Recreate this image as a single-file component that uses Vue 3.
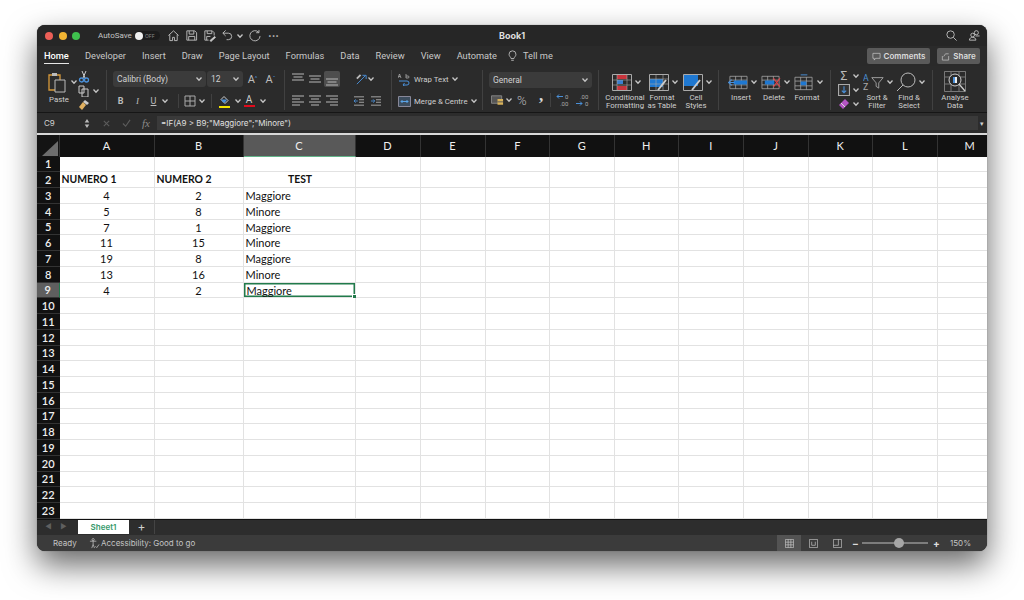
<template>
  <div class="page">
    <div class="window">
      <svg class="defs" width="0" height="0">
        <symbol id="chev" viewBox="0 0 8 8">
          <path d="M1.5 2.5 4 5.2 6.5 2.5" fill="none" stroke="#c4c4c4" stroke-width="1.3" />
        </symbol>
      </svg>

      <!-- Title bar -->
      <header class="titlebar">
        <div class="lights">
          <span class="light red"></span>
          <span class="light yellow"></span>
          <span class="light green"></span>
        </div>
        <span class="autosave">AutoSave</span>
        <span class="toggle"><i></i>OFF</span>
        <svg class="qa" viewBox="0 0 14 14"><path d="M1.5 7 7 2l5.5 5M3 6v6.500h3V9h2v3.500h3V6" /></svg>
        <svg class="qa" viewBox="0 0 14 14"><path d="M2 2h8.500L12.500 4v8H2zM4.500 2v3.500h5V2M4 12V8h6.500v4" /></svg>
        <svg class="qa" viewBox="0 0 14 14"><path d="M2 2h8l2 2v3M2 2v10h4M4.500 2v3h5V2M4 12V8h4" /><path d="m7.500 12.500 5-4.500 1 1-5 4.500z" fill="#ddd" /></svg>
        <svg class="qa" viewBox="0 0 14 14"><path d="M5 1.500 2 4.500 5 7.500M2 4.500h6a3.500 3.500 0 0 1 0 7H6" /></svg>
        <svg class="chev tiny"><use href="#chev" /></svg>
        <svg class="qa redo" viewBox="0 0 14 14"><path d="M11.500 3.500a5.500 5.500 0 1 0 1.500 4M11.800 1v3h-3" /></svg>
        <span class="dots">···</span>
        <span class="doc-title">Book1</span>
        <svg class="qa search" viewBox="0 0 14 14"><circle cx="6" cy="6" r="4" /><path d="m9 9 3.500 3.500" /></svg>
        <svg class="qa people" viewBox="0 0 14 14"><circle cx="9" cy="4" r="2.200" /><circle cx="5" cy="6.500" r="2" /><path d="M1.500 12c0-2 1.500-3 3.500-3s3.500 1 3.500 3zM8 7.500h4.500" /></svg>
      </header>

      <!-- Tabs -->
      <nav class="tabs">
        <span v-for="t in tabs" :key="t" class="tab" :class="{ active: t === 'Home' }">{{ t }}</span>
        <svg class="bulb" viewBox="0 0 10 14"><path d="M3.300 10C3 8 1 7.500 1 5a4 4 0 0 1 8 0c0 2.500-2 3-2.300 5zM3.500 12h3" /></svg>
        <span class="tab tell">Tell me</span>
        <span class="actions">
          <span class="btn comments">
            <svg viewBox="0 0 10 10"><path d="M1 1.500h8v5.500H4L2.500 9V7H1z" /></svg>Comments
          </span>
          <span class="btn share">
            <svg viewBox="0 0 10 10"><path d="M1.500 4.500V9h7V4.500M3 5l2-3h3.500" /></svg>Share
          </span>
        </span>
      </nav>

      <!-- Ribbon -->
      <section class="ribbon">
        <div class="group g-paste">
          <div class="paste">
            <svg class="paste-icon" viewBox="0 0 18 21">
              <path d="M1 3h11v15H1z" fill="none" stroke="#d89a3a" stroke-width="1.300" />
              <path d="M4 1h5v3H4z" fill="#bbb" />
              <path d="M7 8h10v12H7z" fill="#2b2b2b" stroke="#bbb" />
            </svg>
            <span>Paste</span>
          </div>
          <svg class="chev paste-chev"><use href="#chev" /></svg>
          <div class="clip-col">
            <svg class="sm" viewBox="0 0 12 12"><path d="m4 0 3 7M8 0 5 7" stroke="#ccc" fill="none" /><circle cx="3.500" cy="9" r="2" fill="none" stroke="#4a90d9" stroke-width="1.300" /><circle cx="8.500" cy="9" r="2" fill="none" stroke="#4a90d9" stroke-width="1.300" /></svg>
            <div class="row-tight">
              <svg class="sm" viewBox="0 0 12 12"><path d="M1 1h5v7H1zM4 4h6v8H4z" fill="#2b2b2b" stroke="#ccc" /></svg>
              <svg class="chev"><use href="#chev" /></svg>
            </div>
            <svg class="sm" viewBox="0 0 12 12"><path d="m7 1 4 3-2 2-4-3z" fill="#ccc" /><path d="M5 3 1 8l3 3 4-5z" fill="#e0b060" /></svg>
          </div>
        </div>

        <div class="group g-font">
          <div class="line">
            <div class="select font-name">Calibri (Body)<svg class="chev"><use href="#chev" /></svg></div>
            <div class="select font-size">12<svg class="chev"><use href="#chev" /></svg></div>
            <span class="grow-a big">A<sup>^</sup></span>
            <span class="grow-a">A<sup>ˇ</sup></span>
          </div>
          <div class="line second">
            <span class="fmt b">B</span>
            <span class="fmt i">I</span>
            <span class="fmt u">U</span>
            <svg class="chev"><use href="#chev" /></svg>
            <span class="sep first-sep"></span>
            <svg class="sm borders" viewBox="0 0 12 12"><path d="M1 1h10v10H1zM6 1v10M1 6h10" fill="none" stroke="#aaa" /></svg>
            <svg class="chev"><use href="#chev" /></svg>
            <span class="sep"></span>
            <span class="colour">
              <svg class="sm" viewBox="0 0 12 9"><path d="m6 1 4 4-3 3-4-4z" fill="none" stroke="#ccc" /><path d="M3 4h6l-2 3H5z" fill="#4a90d9" /></svg>
              <i class="yellow-bar"></i>
            </span>
            <svg class="chev"><use href="#chev" /></svg>
            <span class="colour letter">A<i class="red-bar"></i></span>
            <svg class="chev"><use href="#chev" /></svg>
          </div>
        </div>

        <div class="group g-align">
          <div class="line">
            <svg v-for="a in alignTop" :key="a.id" class="al" :class="{ on: a.on }" viewBox="0 0 16 16"><path :d="a.d" /></svg>
            <svg class="orient" viewBox="0 0 14 14"><path d="M2 12 11 3M8 2.500h4v4" stroke="#4a90d9" fill="none" /><path d="M2 6 6 2" stroke="#bbb" fill="none" stroke-width="2" /></svg>
            <svg class="chev"><use href="#chev" /></svg>
          </div>
          <div class="line second">
            <svg v-for="a in alignBottom" :key="a.id" class="al" viewBox="0 0 16 16"><path :d="a.d" /></svg>
            <svg class="indent" viewBox="0 0 14 12"><path d="M1 1h12M7 4.500h6M7 7.500h6M1 11h12" stroke="#bbb" fill="none" /><path d="M5.500 6H1M3 4 1 6l2 2" stroke="#4a90d9" fill="none" /></svg>
            <svg class="indent" viewBox="0 0 14 12"><path d="M1 1h12M7 4.500h6M7 7.500h6M1 11h12" stroke="#bbb" fill="none" /><path d="M1 6h4.500M3.500 4l2 2-2 2" stroke="#4a90d9" fill="none" /></svg>
          </div>
        </div>

        <div class="group g-wrap">
          <div class="line">
            <svg class="wrap-icon" viewBox="0 0 13 13"><path d="M3 5 1.500 1 0 5M.8 3.500h1.500M8 1v4h2a1 1 0 0 0 0-2H8" stroke="#aaa" fill="none" stroke-width=".8" /><path d="M1 8h8a2 2 0 0 1 0 4H5M6.500 10 5 12l1.500 1" stroke="#4a90d9" fill="none" /></svg>
            <span class="wrap-label">Wrap Text</span>
            <svg class="chev"><use href="#chev" /></svg>
          </div>
          <div class="line second">
            <svg class="wrap-icon merge" viewBox="0 0 13 11"><path d="M.5.500h12v10H.5z" fill="#3c4d5e" stroke="#889" /><path d="M3 5.500h7M4.500 4 3 5.500 4.500 7M8.500 4 10 5.500 8.500 7" stroke="#5aa5e8" fill="none" /></svg>
            <span class="wrap-label">Merge &amp; Centre</span>
            <svg class="chev"><use href="#chev" /></svg>
          </div>
        </div>

        <div class="group g-number">
          <div class="select general">General<svg class="chev"><use href="#chev" /></svg></div>
          <div class="line second">
            <svg class="currency" viewBox="0 0 14 12"><path d="M.5 1.500h11v8H.5z" fill="#555" stroke="#888" /><path d="M7 5h6v6H7z" fill="#d8b25a" /><path d="M7 8h6" stroke="#555" /></svg>
            <svg class="chev"><use href="#chev" /></svg>
            <span class="percent">%</span>
            <span class="comma">,</span>
            <span class="sep num-sep"></span>
            <svg class="dec" viewBox="0 0 16 14"><path d="M7 3.500H1M3 1.500l-2 2 2 2" stroke="#4a90d9" fill="none" /><text x="9" y="6" class="dec-t">0</text><text x="4" y="13" class="dec-t">.00</text></svg>
            <svg class="dec" viewBox="0 0 16 14"><text x="5" y="6" class="dec-t">.00</text><path d="M1 10.500h6M5 8.500l2 2-2 2" stroke="#4a90d9" fill="none" /><text x="10" y="13" class="dec-t">0</text></svg>
          </div>
        </div>

        <div class="group g-styles">
          <div class="big-tool">
            <div class="big-top">
              <svg class="big-icon" viewBox="0 0 20 17"><path d="M.5.500h19v16H.5z" fill="none" stroke="#aaa" /><path d="M5 1h10v4H5z" fill="#c8343c" /><path d="M5 6h6v4H5z" fill="#3a7fd0" /><path d="M5 12h10v4H5z" fill="#c8343c" /><path d="M5 1v15M15 1v15M1 6h18M1 11h18" stroke="#aaa" fill="none" stroke-width=".6" /></svg>
              <svg class="chev"><use href="#chev" /></svg>
            </div>
            <span>Conditional<br />Formatting</span>
          </div>
          <div class="big-tool">
            <div class="big-top">
              <svg class="big-icon" viewBox="0 0 20 17"><path d="M.5.500h19v16H.5z" fill="none" stroke="#aaa" /><path d="M1 5h13v8H1z" fill="#1f78d1" /><path d="M7 1v15M14 1v15M1 5h18M1 10h18" stroke="#aaa" fill="none" stroke-width=".6" /><path d="M17 6 9 16" stroke="#ccc" stroke-width="2" /></svg>
              <svg class="chev"><use href="#chev" /></svg>
            </div>
            <span>Format<br />as Table</span>
          </div>
          <div class="big-tool">
            <div class="big-top">
              <svg class="big-icon" viewBox="0 0 20 17"><path d="M.5.500h19v16H.5z" fill="none" stroke="#aaa" /><path d="M1 1h14v11H1z" fill="#1f78d1" /><path d="M17 6 9 16" stroke="#ccc" stroke-width="2" /></svg>
              <svg class="chev"><use href="#chev" /></svg>
            </div>
            <span>Cell<br />Styles</span>
          </div>
        </div>

        <div class="group g-cells">
          <div class="big-tool">
            <div class="big-top">
              <svg class="big-icon" viewBox="0 0 21 15"><path d="M2 1h18v13H2zM2 5h18M2 10h18M8 1v13M14 1v13" fill="none" stroke="#aaa" stroke-width=".8" /><path d="M6 5.500h14v4H6z" fill="#1f78d1" /><path d="M7 7.500H.5M4 4.500l-3.500 3 3.500 3" stroke="#4a90d9" fill="none" stroke-width="1.200" /></svg>
              <svg class="chev"><use href="#chev" /></svg>
            </div>
            <span>Insert</span>
          </div>
          <div class="big-tool">
            <div class="big-top">
              <svg class="big-icon" viewBox="0 0 21 15"><path d="M1 1h18v13H1zM1 5h18M1 10h18M7 1v13M13 1v13" fill="none" stroke="#aaa" stroke-width=".8" /><path d="M4 5.500h10v4H4z" fill="#1f78d1" /><path d="m13 3 7 9M20 3l-7 9" stroke="#d8434a" stroke-width="1.200" /></svg>
              <svg class="chev"><use href="#chev" /></svg>
            </div>
            <span>Delete</span>
          </div>
          <div class="big-tool">
            <div class="big-top">
              <svg class="big-icon" viewBox="0 0 21 17"><path d="M7 .500h7" stroke="#4a90d9" /><path d="M1 3h18v13H1zM1 7h18M1 12h18M7 3v13M13 3v13" fill="none" stroke="#aaa" stroke-width=".8" /><path d="M7 7.500h6v4H7z" fill="#1f78d1" /></svg>
              <svg class="chev"><use href="#chev" /></svg>
            </div>
            <span>Format</span>
          </div>
        </div>

        <div class="group g-edit">
          <div class="edit-col">
            <div class="row-tight"><span class="sigma">Σ</span><svg class="chev"><use href="#chev" /></svg></div>
            <div class="row-tight">
              <svg class="sm" viewBox="0 0 11 11"><path d="M.5.500h10v10H.5z" fill="#333" stroke="#aaa" /><path d="M5.500 2v6M3.500 6l2 2 2-2" stroke="#4a90d9" fill="none" /></svg>
              <svg class="chev"><use href="#chev" /></svg>
            </div>
            <div class="row-tight">
              <svg class="sm" viewBox="0 0 12 12"><path d="m7 1 4 4-6 6-4-4z" fill="#b455c4" /><path d="m3 5 4 4" stroke="#ddd" /></svg>
              <svg class="chev"><use href="#chev" /></svg>
            </div>
          </div>
          <div class="big-tool sort">
            <div class="big-top">
              <svg class="sort-icon" viewBox="0 0 24 20"><text x="0" y="9" class="az">A</text><text x="0" y="19" class="az dim">Z</text><path d="M10 5h13l-5 6v6l-3-2v-4z" fill="none" stroke="#aaa" /></svg>
              <svg class="chev"><use href="#chev" /></svg>
            </div>
            <span>Sort &amp;<br />Filter</span>
          </div>
          <div class="big-tool find">
            <div class="big-top">
              <svg class="big-icon" viewBox="0 0 20 20"><circle cx="12" cy="8" r="7" fill="none" stroke="#bbb" /><path d="m7 13-6 6" stroke="#bbb" /></svg>
              <svg class="chev"><use href="#chev" /></svg>
            </div>
            <span>Find &amp;<br />Select</span>
          </div>
        </div>

        <div class="g-analyse big-tool">
          <svg class="analyse-icon" viewBox="0 0 22 21"><path d="M.5.500h21v20H.5zM1 6h20M1 13h20M7 1v19M15 1v19" fill="none" stroke="#999" stroke-width=".7" /><circle cx="11" cy="9" r="6" fill="#2b2b2b" stroke="#ccc" /><path d="M9 6h2v6H9z" fill="#4a90d9" /><path d="M11 6h2v6h-2z" fill="#eee" /><path d="m15 13 6 7" stroke="#ccc" stroke-width="1.300" /></svg>
          <span>Analyse<br />Data</span>
        </div>
      </section>

      <!-- Formula bar -->
      <section class="formula">
        <span class="name-box">C9</span>
        <svg class="stepper" viewBox="0 0 6 12"><path d="M3 1 5.500 5h-5zM3 11 .5 7h5z" fill="#bbb" /></svg>
        <svg class="fx-ico" viewBox="0 0 10 10"><path d="m2 2 6 6M8 2 2 8" stroke="#5c5c5c" stroke-width="1.200" /></svg>
        <svg class="fx-ico" viewBox="0 0 10 10"><path d="m1 5 3 3 5-7" stroke="#5c5c5c" stroke-width="1.200" fill="none" /></svg>
        <span class="fx">fx</span>
        <div class="input">=IF(A9 &gt; B9;"Maggiore";"Minore")</div>
        <span class="expand">▾</span>
      </section>

      <!-- Sheet -->
      <section class="sheet">
        <div class="corner"><i></i></div>
        <div v-for="c in cols" :key="c" class="col-head" :class="{ sel: c === 'C' }">{{ c }}</div>
        <template v-for="r in 23" :key="r">
          <div class="row-head" :class="{ sel: r === 9 }">{{ r }}</div>
          <div
            v-for="c in cols"
            :key="c"
            class="cell"
            :class="cellClass(r, c)"
          >{{ cellText(r, c) }}</div>
        </template>
      </section>

      <!-- Sheet tabs -->
      <section class="sheet-tabs">
        <span class="nav-arrow">◀</span>
        <span class="nav-arrow">▶</span>
        <span class="sheet-tab">Sheet1</span>
        <span class="add">+</span>
      </section>

      <!-- Status bar -->
      <footer class="status">
        <span class="ready">Ready</span>
        <svg class="access" viewBox="0 0 12 12"><circle cx="4.500" cy="1.800" r="1.200" /><path d="M1 3.500h7M4.500 3.500V7L3 11M4.500 7 6 11M7 9l1.500 1.500L11 7" /></svg>
        <span>Accessibility: Good to go</span>
        <div class="views">
          <span class="view on"><svg viewBox="0 0 10 10"><path d="M.5.500h9v9h-9zM3.500.500v9M6.500.500v9M.5 3.500h9M.5 6.500h9" /></svg></span>
          <span class="view"><svg viewBox="0 0 10 10"><path d="M.5.500h9v9h-9zM3 3v4h4V3" /></svg></span>
          <span class="view"><svg viewBox="0 0 10 10"><path d="M.5.500h9v9h-9zM.5 7h5.500V.500" /></svg></span>
        </div>
        <span class="zoom-sign">−</span>
        <div class="slider"><i></i></div>
        <span class="zoom-sign">+</span>
        <span class="zoom-val">150%</span>
      </footer>
    </div>
  </div>
</template>

<script setup>
const tabs = ['Home', 'Developer', 'Insert', 'Draw', 'Page Layout', 'Formulas', 'Data', 'Review', 'View', 'Automate']
const cols = ['A', 'B', 'C', 'D', 'E', 'F', 'G', 'H', 'I', 'J', 'K', 'L', 'M']

const alignTop = [
  { id: 'top', d: 'M2 3h12M3.500 6h9M2 9h12' },
  { id: 'mid', d: 'M2 5h12M3.500 8h9M2 11h12' },
  { id: 'bot', d: 'M2 8h12M3.500 11h9M2 14h12', on: true }
]
const alignBottom = [
  { id: 'left', d: 'M2 3h12M2 6h8M2 9h12M2 12h8' },
  { id: 'centre', d: 'M2 3h12M4 6h8M2 9h12M4 12h8' },
  { id: 'right', d: 'M2 3h12M6 6h8M2 9h12M6 12h8' }
]

const data = [
  ['NUMERO 1', 'NUMERO 2', 'TEST'],
  [4, 2, 'Maggiore'],
  [5, 8, 'Minore'],
  [7, 1, 'Maggiore'],
  [11, 15, 'Minore'],
  [19, 8, 'Maggiore'],
  [13, 16, 'Minore'],
  [4, 2, 'Maggiore']
]

const cellText = (r, c) => {
  const row = data[r - 2]
  const i = cols.indexOf(c)
  return row && i < 3 ? row[i] : ''
}

const cellClass = (r, c) => ({
  title: r === 2,
  num: r > 2 && (c === 'A' || c === 'B'),
  centre: r === 2 && c === 'C',
  picked: r === 9 && c === 'C'
})
</script>

<style>
html, body {
  margin: 0;
  background: #fff;
  overflow: hidden;
}
</style>

<style scoped>
.page {
  width: 1024px;
  height: 600px;
  box-sizing: border-box;
  padding: 25px 37px 0;
  background: #fff;
  font-family: Inter, "Liberation Sans", sans-serif;
  overflow: hidden;
}

.window {
  width: 950px;
  height: 526px;
  border-radius: 8px;
  overflow: hidden;
  display: flex;
  flex-direction: column;
  background: #2b2b2b;
  color: #cfcfcf;
  box-shadow: 0 0 1px #555, 0 14px 32px rgba(0, 0, 0, 0.6);
}

.defs { position: absolute; }

.chev {
  width: 8px;
  height: 8px;
  flex: none;
}

/* title bar */
.titlebar {
  height: 21px;
  flex: none;
  display: flex;
  align-items: center;
  background: #262626;
  position: relative;
}

.lights {
  display: flex;
  gap: 5.5px;
  margin-left: 8px;
  width: 53px;
}

.light {
  width: 8px;
  height: 8px;
  border-radius: 50%;
}

.red { background: #ec5f57; }
.yellow { background: #f2b533; }
.green { background: #3fc04e; }

.autosave {
  width: 37px;
  font-family: Roboto, sans-serif;
  font-size: 8px;
  color: #c4c4c4;
}

.toggle {
  width: 25px;
  height: 9px;
  margin-right: 7px;
  border-radius: 5px;
  background: #1b1b1b;
  color: #8a8a8a;
  font-size: 5px;
  display: flex;
  align-items: center;
  gap: 2px;
}

.toggle i {
  width: 8px;
  height: 8px;
  border-radius: 50%;
  background: #f0f0f0;
}

.qa {
  width: 13px;
  height: 13px;
  margin-right: 5px;
  fill: none;
  stroke: #bdbdbd;
  stroke-width: 1;
  flex: none;
}

.tiny { margin: 0 4px 0 -3px; }
.redo { margin-right: 7px; }

.dots {
  font-size: 11px;
  color: #bdbdbd;
  font-weight: 700;
}

.doc-title {
  position: absolute;
  left: 0;
  right: 0;
  text-align: center;
  font-size: 9px;
  font-weight: 700;
  color: #dedede;
  pointer-events: none;
}

.search { margin-left: auto; margin-right: 10px; }
.people { margin-right: 6px; }

/* tabs */
.tabs {
  height: 20px;
  flex: none;
  display: flex;
  align-items: center;
  padding-left: 7px;
  background: #2a2a2a;
  gap: 16px;
  font-family: Roboto, sans-serif;
  font-size: 9.25px;
}

.tab {
  color: #c8c8c8;
  white-space: nowrap;
  line-height: 15px;
  border-bottom: 1px solid transparent;
}

.tab.active {
  width: 25px;
  color: #fff;
  font-weight: 500;
  border-bottom: 1.5px solid #e6e6e6;
}

.bulb {
  width: 9px;
  height: 12px;
  fill: none;
  stroke: #c4c4c4;
  flex: none;
  margin: 0 -10px 0 -5px;
}

.actions {
  margin-left: auto;
  display: flex;
  gap: 7px;
  margin-right: 7px;
}

.btn {
  height: 16px;
  border-radius: 2px;
  background: #5a5a5a;
  color: #dcdcdc;
  font-family: Inter, sans-serif;
  font-size: 8px;
  font-weight: 600;
  display: flex;
  align-items: center;
  justify-content: center;
  gap: 3px;
}

.btn svg {
  width: 9px;
  height: 9px;
  fill: none;
  stroke: #d4d4d4;
  stroke-width: .7;
}

.comments { width: 63px; }
.share { width: 43px; }

/* ribbon */
.ribbon {
  height: 47px;
  flex: none;
  display: flex;
  background: #2b2b2b;
  border-bottom: 1px solid #161616;
  box-sizing: border-box;
  padding-top: 4px;
  font-family: Roboto, sans-serif;
  font-size: 7.8px;
  color: #cfcfcf;
}

.group {
  height: 40px;
  box-sizing: border-box;
  border-right: 1px solid #414141;
  flex: none;
}

.line {
  display: flex;
  align-items: center;
  height: 18px;
}

.second { margin-top: 4px; }

.sm {
  width: 12px;
  height: 12px;
  flex: none;
}

.row-tight {
  display: flex;
  align-items: center;
  gap: 2px;
}

.g-paste {
  width: 70px;
  padding-left: 10px;
  display: flex;
}

.paste {
  width: 24px;
  display: flex;
  flex-direction: column;
  align-items: center;
}

.paste span { margin-top: 2px; }

.paste-icon {
  width: 18px;
  height: 21px;
  margin-top: 2px;
  margin-left: -4px;
}

.paste-chev { margin: 8px 0 0 -1px; }

.clip-col {
  display: flex;
  flex-direction: column;
  gap: 2px;
  padding-top: 1px;
}

.g-font {
  width: 178px;
  padding-left: 6px;
}

.select {
  height: 16px;
  border-radius: 3px;
  background: #3b3b3b;
  display: flex;
  align-items: center;
  justify-content: space-between;
  padding: 0 3px 0 4px;
  box-sizing: border-box;
  font-size: 8.5px;
  color: #d2d2d2;
}

.font-name { width: 93px; }
.font-size { width: 36px; margin-left: 1px; }

.grow-a {
  width: 17px;
  margin-left: 1px;
  text-align: center;
  font-size: 11px;
  color: #bdbdbd;
}

.grow-a sup {
  font-size: 6px;
  color: #4a90d9;
  vertical-align: 3px;
  line-height: 0;
}

.fmt {
  width: 17px;
  text-align: center;
  font-size: 9px;
  color: #bdbdbd;
}

.b { font-weight: 700; margin-left: -1px; }
.i { font-style: italic; font-family: "Liberation Serif", serif; }
.u { text-decoration: underline; width: 15px; }

.sep {
  width: 1px;
  height: 14px;
  background: #414141;
  margin: 0 5px;
  flex: none;
}

.first-sep { margin-left: 9px; }

.borders { margin-right: 2px; }

.colour {
  width: 14px;
  display: flex;
  flex-direction: column;
  align-items: center;
  font-size: 10px;
  color: #cfcfcf;
  margin-right: 3px;
}

.letter {
  line-height: 10px;
}

.yellow-bar,
.red-bar {
  width: 11px;
  height: 2.5px;
  display: block;
}

.yellow-bar { background: #f5e400; }
.red-bar { background: #e00b1c; }

.g-align {
  width: 107px;
  padding-left: 5px;
}

.al {
  width: 16px;
  height: 16px;
  margin-right: 1px;
  fill: none;
  stroke: #b8b8b8;
  flex: none;
  border-radius: 2px;
}

.al.on { background: #4e4e4e; }

.orient {
  width: 13px;
  height: 13px;
  margin-left: 14px;
  flex: none;
}

.g-align .chev { margin-left: -1px; }

.indent {
  width: 12px;
  height: 10px;
  margin-left: 12px;
  flex: none;
}

.indent + .indent { margin-left: 5px; }

.g-wrap {
  width: 91px;
  padding-left: 6px;
}

.wrap-icon {
  width: 13px;
  height: 13px;
  flex: none;
}

.merge { height: 11px; }

.wrap-label {
  margin: 0 2px 0 3px;
  white-space: nowrap;
}

.g-number {
  width: 116px;
  padding-left: 6px;
}

.general {
  width: 103px;
  height: 16px;
  margin-top: 2px;
}

.g-number .second { margin-top: 3px; }

.currency {
  width: 13px;
  height: 12px;
  margin-left: 2px;
  flex: none;
}

.g-number .chev { margin-left: 1px; }

.percent {
  width: 14px;
  margin-left: 4px;
  font-size: 13px;
  color: #bbb;
  font-weight: 300;
}

.comma {
  width: 12px;
  margin-left: 4px;
  font-family: "Liberation Serif", serif;
  font-size: 17px;
  font-weight: 700;
  line-height: 10px;
  color: #d8d8d8;
  text-align: center;
  transform: translateY(-4px);
}

.num-sep { margin: 0 5px 0 3px; }

.dec {
  width: 16px;
  height: 14px;
  flex: none;
  margin-right: 3px;
}

.dec-t {
  font-size: 6px;
  fill: #aaa;
}

.g-styles {
  width: 120px;
  display: flex;
}

.big-tool {
  display: flex;
  flex-direction: column;
  align-items: center;
  text-align: center;
  line-height: 8px;
  white-space: nowrap;
  flex: none;
}

.big-top {
  height: 24px;
  flex: none;
  display: flex;
  align-items: center;
  gap: 2px;
  margin-left: 3px;
}

.big-icon {
  width: 20px;
  height: 17px;
  flex: none;
}

.g-styles .big-tool { width: 22px; }
.g-styles .big-tool:first-child { width: 52px; }
.g-styles .big-tool:last-child { width: 46px; }

.g-cells {
  width: 112px;
  display: flex;
  padding-left: 5.5px;
}

.g-cells .big-tool { width: 33px; }

.g-edit {
  width: 102px;
  display: flex;
  padding-left: 7px;
}

.edit-col {
  display: flex;
  flex-direction: column;
  gap: 2px;
  width: 22px;
  flex: none;
  align-items: flex-start;
}

.sigma {
  width: 12px;
  text-align: center;
  font-size: 12px;
  line-height: 12px;
  color: #bbb;
}

.sort { width: 34px; }
.find { width: 30px; }
.find .big-top { margin-left: 4px; }

.sort-icon {
  width: 21px;
  height: 18px;
  flex: none;
}

.az {
  font-size: 10px;
  fill: #4a90d9;
}

.az.dim { fill: #aaa; }

.find .big-icon { height: 20px; }

.g-analyse {
  width: 42px;
  margin-left: 1px;
}

.analyse-icon {
  width: 22px;
  height: 21px;
  margin: 1px 0 2px;
}

/* formula bar */
.formula {
  height: 20px;
  flex: none;
  display: flex;
  align-items: center;
  background: #2c2c2c;
  border-bottom: 2px solid #d8d8d8;
  font-size: 8px;
}

.name-box {
  width: 40px;
  padding-left: 7px;
  color: #d4d4d4;
}

.stepper {
  width: 6px;
  height: 11px;
  margin-right: 12px;
  flex: none;
}

.fx-ico {
  width: 9px;
  height: 9px;
  margin-right: 11px;
  flex: none;
}

.fx {
  font-family: "Liberation Serif", serif;
  font-style: italic;
  font-size: 11px;
  color: #8a8a8a;
  width: 15px;
}

.input {
  width: 821px;
  height: 14px;
  background: #3a3a3a;
  display: flex;
  align-items: center;
  padding-left: 4px;
  box-sizing: border-box;
  color: #e0e0e0;
  font-size: 8px;
}

.expand {
  margin-left: 2px;
  font-size: 7px;
}

/* sheet */
.sheet {
  flex: 1;
  display: grid;
  grid-template-columns: 22.5px 95px 89px 112px 65px 65px 64.5px 64.5px 64.5px 64.5px 65px 64.5px 64.5px 65px;
  grid-template-rows: 21.5px repeat(23, 15.75px);
  background: #fff;
  overflow: hidden;
  font-family: Lato, "Liberation Sans", sans-serif;
  font-size: 11px;
}

.corner {
  background: #141414;
  position: relative;
  border-right: 1px solid #333;
}

.corner i {
  position: absolute;
  right: 1px;
  bottom: 1px;
  width: 0;
  height: 0;
  border-style: solid;
  border-width: 0 0 15px 16px;
  border-color: transparent transparent #6d6d6d transparent;
}

.col-head {
  background: #111;
  color: #efefef;
  display: flex;
  align-items: center;
  justify-content: center;
  border-right: 1px solid #333;
  box-sizing: border-box;
}

.col-head.sel {
  background: #595959;
  border-bottom: 1px solid #63b48a;
}

.row-head {
  background: #111;
  color: #efefef;
  display: flex;
  align-items: center;
  justify-content: center;
  font-weight: 600;
  border-bottom: 1px solid #333;
  box-sizing: border-box;
}

.row-head.sel {
  background: #5f5f5f;
  border-right: 1px solid #1f7a4d;
}

.cell {
  border-right: 1px solid #e2e2e2;
  border-bottom: 1px solid #e2e2e2;
  box-sizing: border-box;
  color: #111;
  padding-left: 2px;
  line-height: 15.5px;
  white-space: nowrap;
  position: relative;
}

.title {
  font-weight: 700;
  font-size: 10.4px;
}

.num { text-align: center; padding-left: 0; }
.centre { text-align: center; }

.picked {
  padding-left: 3px;
  box-shadow: inset 0 0 0 1.5px #217a4b;
}

.picked::after {
  content: "";
  position: absolute;
  right: -2px;
  bottom: -2px;
  width: 3px;
  height: 3px;
  background: #217a4b;
  border: 1px solid #fff;
}

/* sheet tabs */
.sheet-tabs {
  height: 16px;
  flex: none;
  display: flex;
  align-items: flex-start;
  background: #2d2d2d;
  border-top: 1px solid #111;
  box-sizing: border-box;
}

.nav-arrow {
  width: 15px;
  text-align: center;
  font-size: 7px;
  line-height: 14px;
  color: #5f5f5f;
  padding-left: 4px;
}

.nav-arrow + .nav-arrow { padding-left: 0; margin-right: 7px; }

.sheet-tab {
  width: 51px;
  height: 14px;
  background: #fff;
  color: #35996a;
  font-size: 8px;
  font-weight: 600;
  text-align: center;
  line-height: 14px;
}

.add {
  width: 25px;
  text-align: center;
  font-size: 12px;
  line-height: 14px;
  color: #cfcfcf;
  border-right: 1px solid #444;
  height: 14px;
}

/* status bar */
.status {
  height: 16px;
  flex: none;
  display: flex;
  align-items: center;
  background: #3b3b3b;
  font-size: 8px;
  color: #c4c4c4;
}

.ready { margin-left: 16px; width: 36px; }

.access {
  width: 11px;
  height: 11px;
  fill: none;
  stroke: #c4c4c4;
  stroke-width: .8;
  margin-right: 1px;
  flex: none;
}

.views {
  margin-left: auto;
  display: flex;
  height: 16px;
}

.view {
  width: 24px;
  display: flex;
  align-items: center;
  justify-content: center;
}

.view.on { background: #535353; }

.view svg {
  width: 9px;
  height: 9px;
  fill: none;
  stroke: #cfcfcf;
  stroke-width: .7;
}

.zoom-sign {
  font-size: 10px;
  font-weight: 700;
  width: 11px;
  text-align: center;
  color: #ddd;
  margin-left: 1px;
}

.slider {
  width: 66px;
  height: 2px;
  margin: 0 2px 0 1px;
  background: #7d7d7d;
  position: relative;
}

.slider i {
  position: absolute;
  left: 32px;
  top: -4px;
  width: 10px;
  height: 10px;
  border-radius: 50%;
  background: #a6a6a6;
}

.zoom-val {
  width: 22px;
  margin-left: 8px;
  margin-right: 15px;
  white-space: nowrap;
}
</style>
